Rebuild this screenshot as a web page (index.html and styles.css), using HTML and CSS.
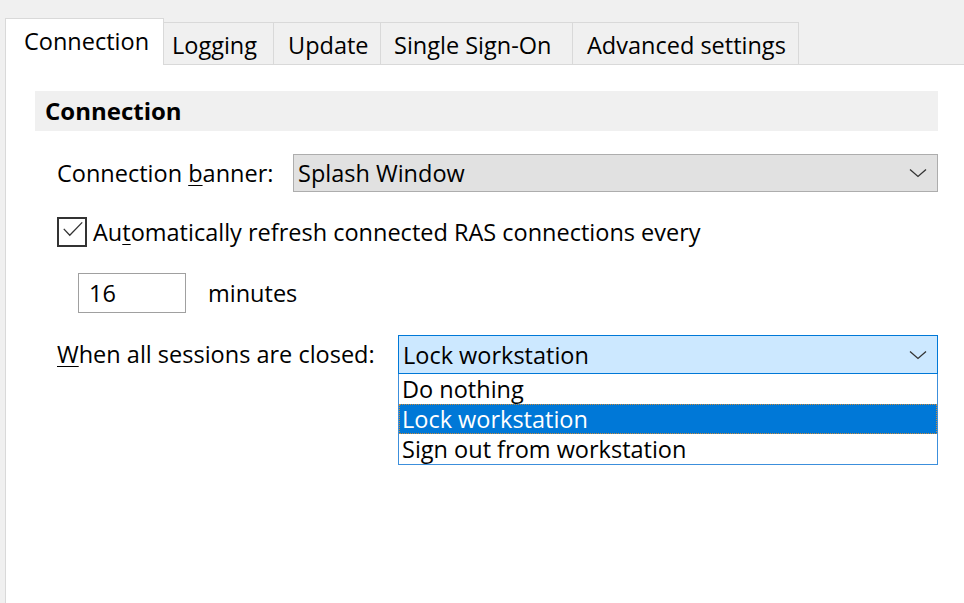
FILE: index.html
```html
<!DOCTYPE html>
<html>
<head>
<meta charset="utf-8">
<link rel="stylesheet" href="styles.css">
</head>
<body>
<div class="window">
  <div class="tabs">
    <div class="tab active">Connection</div>
    <div class="tab t-logging">Logging</div>
    <div class="tab t-update">Update</div>
    <div class="tab t-sso">Single Sign-On</div>
    <div class="tab t-adv">Advanced settings</div>
  </div>
  <div class="panel">
    <div class="section-header">Connection</div>
    <div class="form">
      <div class="row row-banner">
        <div class="label label-banner">Connection <u>b</u>anner:</div>
        <div class="combo">
          <span class="combo-text">Splash Window</span>
          <svg class="chev" width="18" height="10" viewBox="0 0 18 10"><polyline points="1,1.5 9,8.5 17,1.5" fill="none" stroke="#333" stroke-width="1.3"/></svg>
        </div>
      </div>
      <div class="row row-check">
        <div class="checkbox">
          <svg width="26" height="26" viewBox="0 0 26 26"><polyline points="3,8.5 9.5,15.5 23,1.5" fill="none" stroke="#333" stroke-width="1.4"/></svg>
        </div>
        <div class="check-label">Au<u>t</u>omatically refresh connected RAS connections every</div>
      </div>
      <div class="row row-minutes">
        <div class="num-input">16</div>
        <div class="minutes">minutes</div>
      </div>
      <div class="row row-sessions">
        <div class="label label-sessions"><u>W</u>hen all sessions are closed:</div>
        <div class="dropdown">
          <div class="combo combo-open">
            <span class="combo-text">Lock workstation</span>
            <svg class="chev" width="18" height="10" viewBox="0 0 18 10"><polyline points="1,1.5 9,8.5 17,1.5" fill="none" stroke="#333" stroke-width="1.3"/></svg>
          </div>
          <div class="list">
            <div class="item">Do nothing</div>
            <div class="item selected">Lock workstation</div>
            <div class="item">Sign out from workstation</div>
          </div>
        </div>
      </div>
    </div>
  </div>
</div>
</body>
</html>
```

FILE: styles.css
```css
html, body {
  margin: 0;
  padding: 0;
  background: #f0f0f0;
}
body {
  font-family: "Open Sans", "Noto Sans", sans-serif;
  font-size: 23.5px;
  color: #000;
  width: 964px;
  height: 603px;
  overflow: hidden;
}
.window {
  padding: 18px 0 0 5px;
  height: 603px;
  box-sizing: border-box;
  display: flex;
  flex-direction: column;
}
.tabs {
  display: flex;
  align-items: flex-end;
  height: 47px;
  box-sizing: border-box;
  border-bottom: 1px solid #d9d9d9;
  flex: none;
}
.tab {
  height: 42px;
  box-sizing: border-box;
  border: 1px solid #d9d9d9;
  border-bottom: none;
  border-left: none;
  background: #f0f0f0;
  line-height: 40px;
  padding-top: 2px;
  white-space: nowrap;
}
.tab.active {
  height: 47px;
  margin-bottom: -1px;
  background: #fff;
  border-left: 1px solid #d9d9d9;
  width: 159px;
  padding-left: 18px;
  line-height: 44px;
  padding-top: 0;
}
.t-logging { width: 110px; padding-left: 8px; }
.t-update { width: 107px; padding-left: 14px; }
.t-sso { width: 192px; padding-left: 13px; }
.t-adv { width: 226px; padding-left: 14px; }
.panel {
  flex: 1;
  background: #fff;
  border-left: 1px solid #d9d9d9;
  padding: 26px 0 0 29px;
}
.section-header {
  width: 903px;
  height: 40px;
  box-sizing: border-box;
  background: #f0f0f0;
  font-weight: bold;
  font-size: 24px;
  padding-left: 10px;
  line-height: 40px;
}
.form {
  padding-left: 22px;
  width: 881px;
}
.row {
  display: flex;
  align-items: center;
}
.row-banner { margin-top: 23px; }
.row-check { margin-top: 25px; }
.row-minutes { margin-top: 26px; padding-left: 21px; }
.row-sessions { margin-top: 22px; align-items: flex-start; }
.label { white-space: nowrap; }
.label-banner { width: 236px; }
.label-sessions { width: 341px; height: 39px; line-height: 39px; }
.combo {
  flex: 1;
  height: 38px;
  box-sizing: border-box;
  background: #e1e1e1;
  border: 1px solid #adadad;
  display: flex;
  align-items: center;
  justify-content: space-between;
  padding: 0 10px 0 4px;
}
.combo-open {
  flex: none;
  height: 39px;
  background: #cce8ff;
  border-color: #0078d7;
}
.chev { display: block; }
.checkbox {
  width: 30px;
  height: 30px;
  box-sizing: border-box;
  border: 2px solid #333;
  background: #fff;
  display: flex;
  padding: 1px 0 0 2px;
}
.checkbox svg { display: block; }
.check-label {
  margin-left: 6px;
  white-space: nowrap;
  line-height: 30px;
}
.num-input {
  width: 108px;
  height: 40px;
  box-sizing: border-box;
  border: 1px solid #a0a0a0;
  padding-left: 10px;
  line-height: 38px;
}
.minutes { margin-left: 22px; }
.dropdown {
  flex: 1;
  display: flex;
  flex-direction: column;
}
.list {
  border: 1px solid #3c8fdc;
  border-top: none;
  background: #fff;
}
.item {
  height: 30px;
  line-height: 30px;
  padding-left: 3px;
  white-space: nowrap;
}
.item.selected {
  background: #0078d7;
  color: #fff;
  outline: 1px dotted #c88a3c;
  outline-offset: -1px;
}
u { text-decoration-thickness: 1px; text-underline-offset: 3px; }
```
